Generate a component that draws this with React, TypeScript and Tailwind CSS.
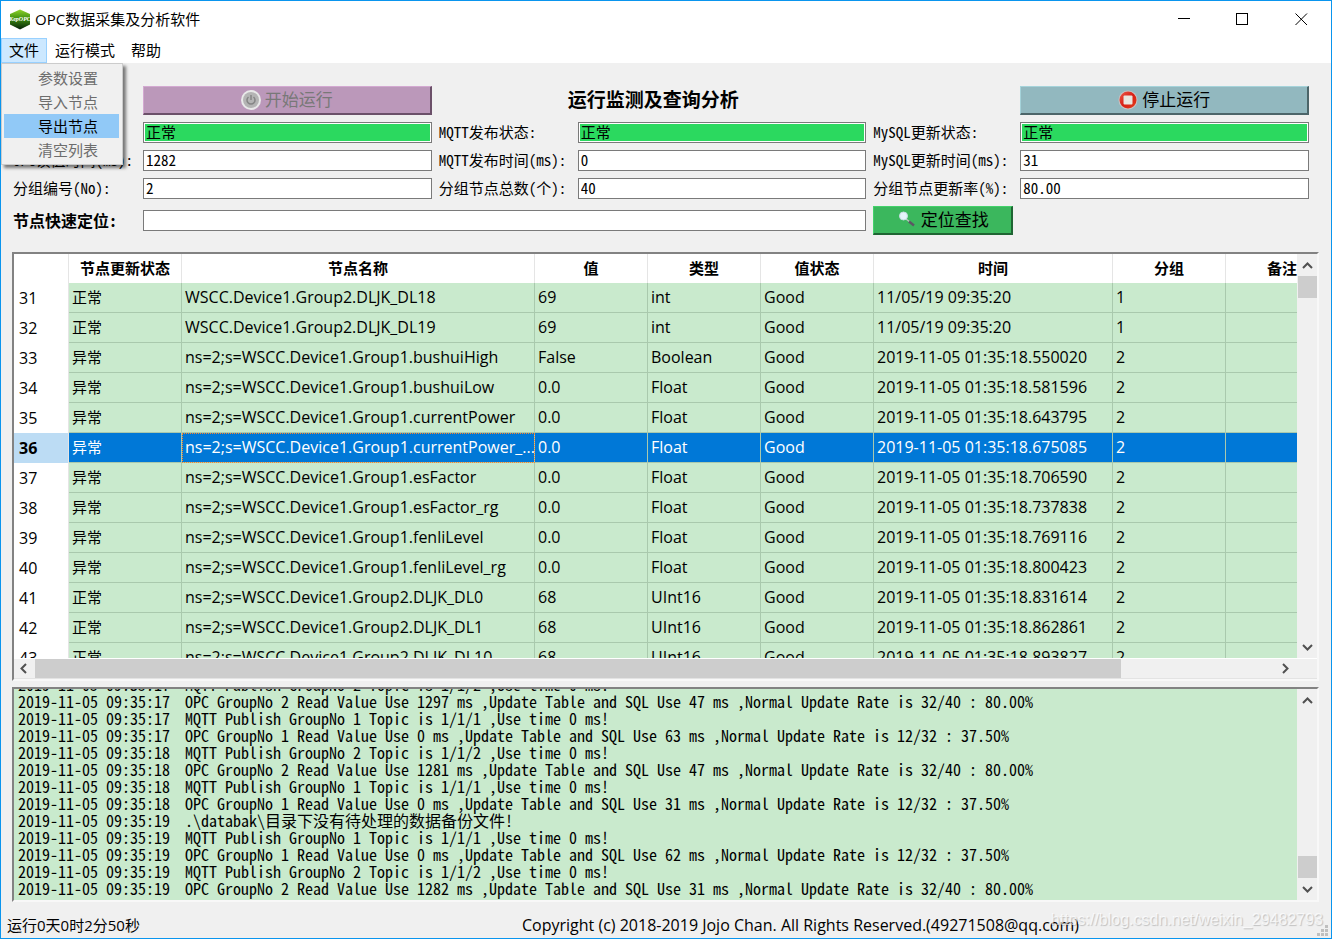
import React from 'react';

type NodeRow = [number, string, string, string, string, string, string, string];

const rows: NodeRow[] = [
    [31, '正常', 'WSCC.Device1.Group2.DLJK_DL18', '69', 'int', 'Good', '11/05/19 09:35:20', '1'],
    [32, '正常', 'WSCC.Device1.Group2.DLJK_DL19', '69', 'int', 'Good', '11/05/19 09:35:20', '1'],
    [33, '异常', 'ns=2;s=WSCC.Device1.Group1.bushuiHigh', 'False', 'Boolean', 'Good', '2019-11-05 01:35:18.550020', '2'],
    [34, '异常', 'ns=2;s=WSCC.Device1.Group1.bushuiLow', '0.0', 'Float', 'Good', '2019-11-05 01:35:18.581596', '2'],
    [35, '异常', 'ns=2;s=WSCC.Device1.Group1.currentPower', '0.0', 'Float', 'Good', '2019-11-05 01:35:18.643795', '2'],
    [36, '异常', 'ns=2;s=WSCC.Device1.Group1.currentPower_...', '0.0', 'Float', 'Good', '2019-11-05 01:35:18.675085', '2'],
    [37, '异常', 'ns=2;s=WSCC.Device1.Group1.esFactor', '0.0', 'Float', 'Good', '2019-11-05 01:35:18.706590', '2'],
    [38, '异常', 'ns=2;s=WSCC.Device1.Group1.esFactor_rg', '0.0', 'Float', 'Good', '2019-11-05 01:35:18.737838', '2'],
    [39, '异常', 'ns=2;s=WSCC.Device1.Group1.fenliLevel', '0.0', 'Float', 'Good', '2019-11-05 01:35:18.769116', '2'],
    [40, '异常', 'ns=2;s=WSCC.Device1.Group1.fenliLevel_rg', '0.0', 'Float', 'Good', '2019-11-05 01:35:18.800423', '2'],
    [41, '正常', 'ns=2;s=WSCC.Device1.Group2.DLJK_DL0', '68', 'UInt16', 'Good', '2019-11-05 01:35:18.831614', '2'],
    [42, '正常', 'ns=2;s=WSCC.Device1.Group2.DLJK_DL1', '68', 'UInt16', 'Good', '2019-11-05 01:35:18.862861', '2'],
    [43, '正常', 'ns=2;s=WSCC.Device1.Group2.DLJK_DL10', '68', 'UInt16', 'Good', '2019-11-05 01:35:18.893827', '2'],
];

const headers = ['节点更新状态', '节点名称', '值', '类型', '值状态', '时间', '分组', '备注'];

const logs: [string, string][] = [
    ['09:35:17', 'MQTT Publish GroupNo 2 Topic is 1/1/2 ,Use time 0 ms!'],
    ['09:35:17', 'OPC GroupNo 2 Read Value Use 1297 ms ,Update Table and SQL Use 47 ms ,Normal Update Rate is 32/40 : 80.00%'],
    ['09:35:17', 'MQTT Publish GroupNo 1 Topic is 1/1/1 ,Use time 0 ms!'],
    ['09:35:17', 'OPC GroupNo 1 Read Value Use 0 ms ,Update Table and SQL Use 63 ms ,Normal Update Rate is 12/32 : 37.50%'],
    ['09:35:18', 'MQTT Publish GroupNo 2 Topic is 1/1/2 ,Use time 0 ms!'],
    ['09:35:18', 'OPC GroupNo 2 Read Value Use 1281 ms ,Update Table and SQL Use 47 ms ,Normal Update Rate is 32/40 : 80.00%'],
    ['09:35:18', 'MQTT Publish GroupNo 1 Topic is 1/1/1 ,Use time 0 ms!'],
    ['09:35:18', 'OPC GroupNo 1 Read Value Use 0 ms ,Update Table and SQL Use 31 ms ,Normal Update Rate is 12/32 : 37.50%'],
    ['09:35:19', '.\\databak\\目录下没有待处理的数据备份文件!'],
    ['09:35:19', 'MQTT Publish GroupNo 1 Topic is 1/1/1 ,Use time 0 ms!'],
    ['09:35:19', 'OPC GroupNo 1 Read Value Use 0 ms ,Update Table and SQL Use 62 ms ,Normal Update Rate is 12/32 : 37.50%'],
    ['09:35:19', 'MQTT Publish GroupNo 2 Topic is 1/1/2 ,Use time 0 ms!'],
    ['09:35:19', 'OPC GroupNo 2 Read Value Use 1282 ms ,Update Table and SQL Use 31 ms ,Normal Update Rate is 32/40 : 80.00%'],
];

const menuItems = [
    { label: '参数设置', enabled: false },
    { label: '导入节点', enabled: false },
    { label: '导出节点', enabled: true },
    { label: '清空列表', enabled: false },
];

const AppLogo = () => (
    <svg width="22" height="22" viewBox="0 0 22 22" aria-hidden="true">
        <defs>
            <linearGradient id="logoFill" x1="0" y1="0" x2="0" y2="1">
                <stop offset="0" stopColor="#8fd32b" />
                <stop offset="0.45" stopColor="#3f8f10" />
                <stop offset="1" stopColor="#06210a" />
            </linearGradient>
        </defs>
        <path d="M11 0.5 L21 5 V15.5 L11 20.5 L1 15.5 V5 Z" fill="url(#logoFill)" />
        <text x="11" y="12" textAnchor="middle" fontSize="6" fontWeight="bold" fontStyle="italic" fill="#fff" fontFamily="Liberation Serif, serif">KepOPC</text>
    </svg>
);

const PowerIcon = () => (
    <svg width="20" height="20" viewBox="0 0 20 20" fill="none" aria-hidden="true">
        <circle cx="10" cy="10" r="10" fill="#e9e9e9" />
        <circle cx="10" cy="10" r="8" fill="#b4b4b4" />
        <path d="M7.5 7 A4 4 0 1 0 12.5 7 M10 5 V10" stroke="#858585" strokeWidth="1.5" />
    </svg>
);

const StopIcon = () => (
    <svg width="20" height="20" viewBox="0 0 20 20" aria-hidden="true">
        <defs>
            <linearGradient id="stopFill" x1="0" y1="0" x2="1" y2="1">
                <stop offset="0" stopColor="#ec5a4c" />
                <stop offset="0.5" stopColor="#d81f14" />
                <stop offset="1" stopColor="#e2401c" />
            </linearGradient>
        </defs>
        <circle cx="10" cy="10" r="9.5" fill="#c9c4c4" />
        <circle cx="10" cy="10" r="8.5" fill="url(#stopFill)" />
        <rect x="5.5" y="5.5" width="9" height="9" rx="1" fill="#e9e6df" />
    </svg>
);

const SearchIcon = () => (
    <svg width="20" height="20" viewBox="0 0 20 20" aria-hidden="true">
        <path d="M9 9 L13 12" stroke="#b9c4bd" strokeWidth="1.5" />
        <path d="M12 11.5 L17 15.5" stroke="#5c5664" strokeWidth="2.5" />
        <circle cx="6.5" cy="6" r="4" fill="#e4f3fb" stroke="#c6dbe2" />
    </svg>
);

const Arrow = ({ d }: { d: string }) => (
    <svg width="19" height="19" viewBox="0 0 19 19" fill="none" stroke="#505050" strokeWidth="2" aria-hidden="true">
        <path d={d} />
    </svg>
);

const UP = 'M5 12 L9.5 7.5 L14 12';
const DOWN = 'M5 7 L9.5 11.5 L14 7';
const LEFT = 'M12 5 L7.5 9.5 L12 14';
const RIGHT = 'M7 5 L11.5 9.5 L7 14';

const Field = ({ id, label, value, ok }: { id: string; label: string; value: string; ok?: boolean }) => (
    <>
        <label htmlFor={id} className="pb-px text-[15px] leading-5 whitespace-nowrap">{label}</label>
        <input
            id={id}
            readOnly
            defaultValue={value}
            className={`h-[21px] w-full min-w-0 border border-[#7a7a7a] px-0.5 pb-0.5 text-[15px] leading-4 outline-none ${ok ? 'bg-[#2bd95f] shadow-[inset_0_0_0_1px_white]' : 'bg-white'}`}
        />
    </>
);

const App: React.FC = () => (
    <div className="flex h-screen min-h-[600px] flex-col overflow-hidden border border-[#0a95ee] bg-[#f0f0f0] font-['Open_Sans','Noto_Sans_CJK_SC',sans-serif] text-black">
        <header className="bg-white">
            <div className="flex h-[37px] items-center pl-2">
                <AppLogo />
                <h1 className="ml-1 flex-1 text-[15px]">OPC数据采集及分析软件</h1>
                <div className="flex text-black">
                    <button aria-label="最小化" className="grid w-[59px] place-items-center">
                        <svg width="13" height="13" viewBox="0 0 13 13" stroke="currentColor"><path d="M1 5.5 H13" /></svg>
                    </button>
                    <button aria-label="最大化" className="grid w-[59px] place-items-center">
                        <svg width="13" height="13" viewBox="0 0 13 13" fill="none" stroke="currentColor"><rect x="0.5" y="0.5" width="11" height="11" /></svg>
                    </button>
                    <button aria-label="关闭" className="grid w-[59px] place-items-center">
                        <svg width="13" height="13" viewBox="0 0 13 13" stroke="currentColor"><path d="M0.5 0.5 L12 12 M12 0.5 L0.5 12" /></svg>
                    </button>
                </div>
            </div>
            <nav className="relative flex h-[25px] text-[15px]">
                <button className="border border-[#99d1ff] bg-[#cce8ff] px-[7px]">文件</button>
                <button className="px-2">运行模式</button>
                <button className="px-2">帮助</button>
                <div role="menu" className="absolute top-full left-0 z-10 w-[122px] border border-[#cccccc] bg-[#f0f0f0] py-0.5 pr-[3px] pl-0.5 shadow-[3px_3px_3px_rgba(0,0,0,0.5)]">
                    {menuItems.map(item => (
                        <button
                            key={item.label}
                            role="menuitem"
                            disabled={!item.enabled}
                            className={`block h-6 w-full pl-[34px] text-left ${item.enabled ? 'bg-[#91c9f7] text-black' : 'text-[#6d6d6d]'}`}
                        >
                            {item.label}
                        </button>
                    ))}
                </div>
            </nav>
        </header>

        <main className="flex min-h-0 flex-1 flex-col pt-[23px]">
            <section className="grid grid-cols-[123px_1fr_132px_1fr_140px_1fr] items-center gap-[7px] pr-[22px] pl-3 font-['Noto_Sans_Mono_CJK_SC','Liberation_Mono','Noto_Sans_CJK_SC',monospace]">
                <button disabled className="col-start-2 flex h-[29px] items-center justify-center gap-1 border-t border-r-2 border-b-2 border-l border-t-[#d3a9d1] border-r-[#6b5069] border-b-[#6b5069] border-l-[#d3a9d1] bg-[#bb98ba] text-[17px] leading-5 text-[#787878]">
                    <PowerIcon /><span className="pb-0.5">开始运行</span>
                </button>
                <h2 className="col-span-2 pb-1 pl-[129px] text-[19px] leading-6 font-bold">运行监测及查询分析</h2>
                <button className="col-start-6 flex h-[29px] items-center justify-center gap-1 border-t border-r-2 border-b-2 border-l border-t-[#a5d3da] border-r-[#4c6569] border-b-[#4c6569] border-l-[#a5d3da] bg-[#92b8bf] text-[17px] leading-5">
                    <StopIcon /><span className="pb-0.5">停止运行</span>
                </button>
                <Field id="opcStatus" label="OPC连接状态:" value="正常" ok />
                <Field id="mqttStatus" label="MQTT发布状态:" value="正常" ok />
                <Field id="mysqlStatus" label="MySQL更新状态:" value="正常" ok />
                <Field id="opcTime" label="OPC读值时间(ms):" value="1282" />
                <Field id="mqttTime" label="MQTT发布时间(ms):" value="0" />
                <Field id="mysqlTime" label="MySQL更新时间(ms):" value="31" />
                <Field id="groupNo" label="分组编号(No):" value="2" />
                <Field id="groupTotal" label="分组节点总数(个):" value="40" />
                <Field id="groupRate" label="分组节点更新率(%):" value="80.00" />
                <label htmlFor="locate" className="pb-0.5 text-[16px] leading-5 font-bold">节点快速定位:</label>
                <input id="locate" className="col-span-3 h-[21px] border border-[#7a7a7a] bg-white px-0.5 text-[15px] outline-none" />
                <button className="flex h-[29px] items-center justify-center gap-1 border-t border-r-2 border-b-2 border-l border-t-[#43d26b] border-r-[#1f6533] border-b-[#1f6533] border-l-[#43d26b] bg-[#3bb75d] text-[17px] leading-5">
                    <SearchIcon /><span className="pb-0.5">定位查找</span>
                </button>
            </section>

            <section className="mt-[17px] mr-3 ml-[11px] grid min-h-0 flex-1 grid-rows-[minmax(0,2fr)_minmax(0,1fr)] gap-1.5">
                <div className="flex min-w-0 flex-col border-2 border-t-[#828282] border-r-[#f8f8f8] border-b-[#f8f8f8] border-l-[#828282]">
                    <div className="flex min-h-0 flex-1">
                        <div className="min-w-0 flex-1 overflow-hidden bg-white">
                            <table className="w-[1325px] table-fixed border-separate border-spacing-0 text-[16px] leading-5">
                                <colgroup>
                                    <col className="w-[55px]" />
                                    <col className="w-[113px]" />
                                    <col className="w-[353px]" />
                                    <col className="w-[113px]" />
                                    <col className="w-[113px]" />
                                    <col className="w-[113px]" />
                                    <col className="w-[239px]" />
                                    <col className="w-[113px]" />
                                    <col className="w-[113px]" />
                                </colgroup>
                                <thead>
                                    <tr className="h-[29px] text-[15px]">
                                        <td className="border-r border-[#e5e5e5]" />
                                        {headers.map(h => (
                                            <th key={h} className="border-r border-[#e5e5e5] p-0 pb-0.5 font-bold">{h}</th>
                                        ))}
                                    </tr>
                                </thead>
                                <tbody>
                                    {rows.map(([no, state, ...cells]) => {
                                        const selected = no === 36;
                                        return (
                                            <tr key={no} className={`h-[30px] ${selected ? 'bg-[#0078d7] text-white' : 'bg-[#c9eacd]'}`}>
                                                <th className={`border-r border-[#e5e5e5] p-0 pl-[5px] text-left text-black ${selected ? 'bg-[#bcdcf4] font-bold' : 'bg-white font-normal'}`}>{no}</th>
                                                <td className="border-r border-b border-[#a9c9ad] p-0 pb-0.5 pl-[3px] text-[15px]">{state}</td>
                                                {cells.map((cell, i) => (
                                                    <td
                                                        key={i}
                                                        className={`border-r border-b border-[#a9c9ad] p-0 pb-0.5 pl-[3px] whitespace-nowrap ${selected && i === 0 ? 'outline-1 -outline-offset-1 outline-dotted outline-[#ff8728]' : ''}`}
                                                    >
                                                        {cell}
                                                    </td>
                                                ))}
                                                <td className="border-r border-b border-[#a9c9ad]" />
                                            </tr>
                                        );
                                    })}
                                </tbody>
                            </table>
                        </div>
                        <div className="ml-px flex w-[19px] flex-col">
                            <button aria-label="向上" className="h-[22px]"><Arrow d={UP} /></button>
                            <div className="h-[22px] bg-[#cdcdcd]" />
                            <button aria-label="向下" className="mt-auto h-[22px]"><Arrow d={DOWN} /></button>
                        </div>
                    </div>
                    <div className="flex h-[21px] border-t border-b border-t-white border-b-[#e3e3e3] pr-5">
                        <button aria-label="向左" className="w-[21px]"><Arrow d={LEFT} /></button>
                        <div className="flex-1"><div className="h-full w-7/8 bg-[#cdcdcd]" /></div>
                        <button aria-label="向右" className="w-[21px]"><Arrow d={RIGHT} /></button>
                    </div>
                </div>

                <div className="flex min-w-0 border-2 border-t-[#828282] border-r-[#f8f8f8] border-b-[#f8f8f8] border-l-[#828282]">
                    <div role="log" className="flex min-w-0 flex-1 flex-col justify-end overflow-hidden bg-[#c9eacd] pb-[3px] pl-1 font-['Noto_Sans_Mono_CJK_SC','Liberation_Mono','Noto_Sans_CJK_SC',monospace] text-[16px] leading-[17px]">
                        {logs.map(([time, message], i) => (
                            <div key={i} className="flex h-[17px] shrink-0 whitespace-nowrap">
                                <time className="w-[167px] shrink-0">2019-11-05 {time}</time>
                                <span>{message}</span>
                            </div>
                        ))}
                    </div>
                    <div className="ml-px flex w-[19px] flex-col">
                        <button aria-label="日志向上" className="h-[22px]"><Arrow d={UP} /></button>
                        <div className="mt-auto h-[22px] bg-[#cdcdcd]" />
                        <button aria-label="日志向下" className="h-[22px]"><Arrow d={DOWN} /></button>
                    </div>
                </div>
            </section>
        </main>

        <footer className="relative flex h-9 items-center pt-2.5 pl-1.5">
            <span className="w-[515px] text-[15px]">运行0天0时2分50秒</span>
            <span className="text-[16px]">Copyright (c) 2018-2019 Jojo Chan. All Rights Reserved.(49271508@qq.com)</span>
            <span className="absolute right-2 bottom-1.5 font-['Liberation_Sans',sans-serif] text-[16px] text-white/70 [text-shadow:1px_1px_1px_rgba(0,0,0,0.2)]">https://blog.csdn.net/weixin_29482793</span>
            <svg className="absolute right-[3px] bottom-0.5" width="11" height="11" viewBox="0 0 11 11" fill="#bfbfbf" aria-hidden="true">
                <path d="M8 0h3v3h-3z M4 4h3v3h-3z M8 4h3v3h-3z M0 8h3v3h-3z M4 8h3v3h-3z M8 8h3v3h-3z" />
            </svg>
        </footer>
    </div>
);

export default App;
